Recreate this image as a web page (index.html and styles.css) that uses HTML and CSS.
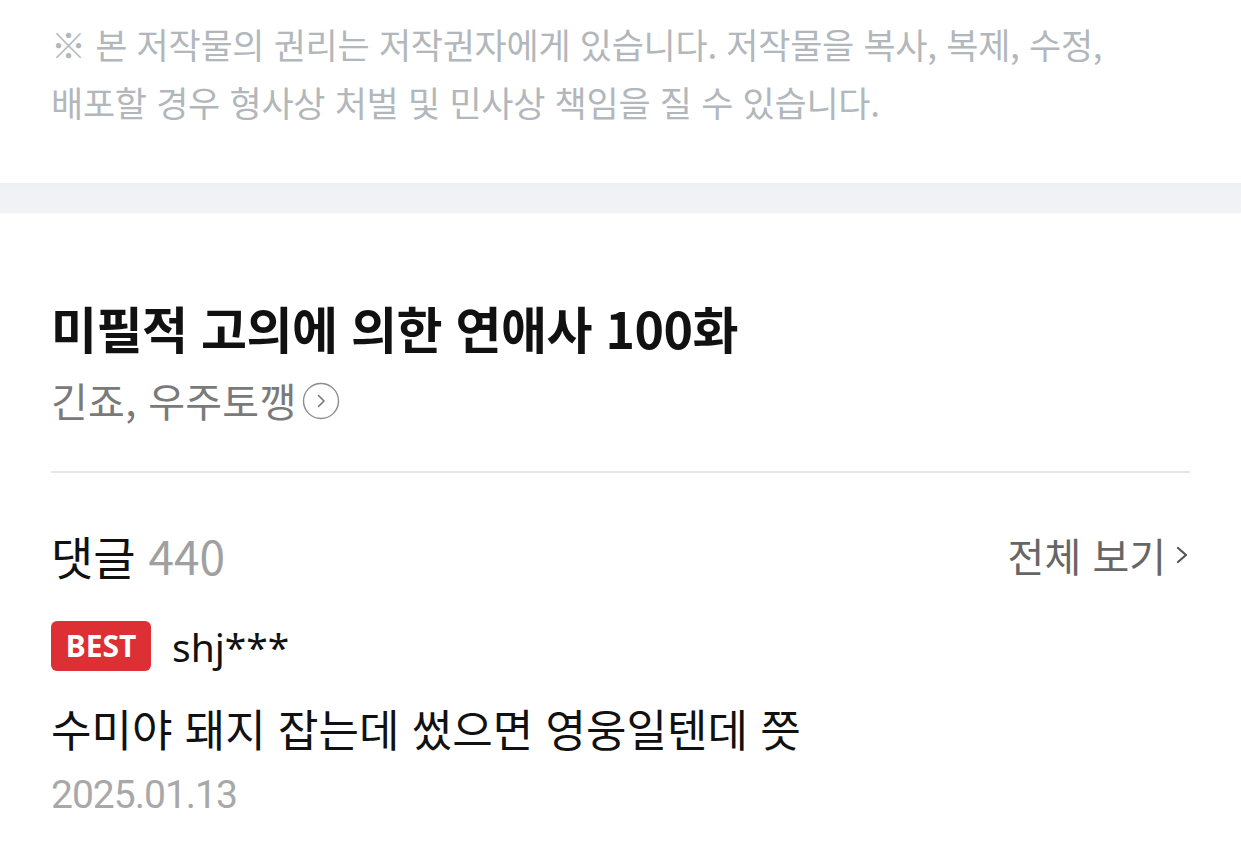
FILE: index.html
```html
<!DOCTYPE html>
<html lang="ko">
<head>
    <meta charset="UTF-8">
    <meta name="viewport" content="width=device-width, initial-scale=1.0">
    <title>미필적 고의에 의한 연애사 100화</title>
    <link rel="stylesheet" href="styles.css">
</head>
<body>
    <!-- Copyright notice -->
    <div class="notice">
        <p>※ 본 저작물의 권리는 저작권자에게 있습니다. 저작물을 복사, 복제, 수정,<br>배포할 경우 형사상 처벌 및 민사상 책임을 질 수 있습니다.</p>
    </div>
    <div class="band"></div>

    <!-- Episode info -->
    <div class="episode">
        <h1 class="episode-title">미필적 고의에 의한 연애사 100화</h1>
        <div class="episode-author">
            <span>긴죠, 우주토깽</span>
            <svg class="author-icon" width="38" height="38" viewBox="0 0 38 38">
                <circle cx="19" cy="19" r="17.5" fill="none" stroke="#8c8c8c" stroke-width="1.4"/>
                <path d="M16.5 13.5 L22 19 L16.5 24.5" fill="none" stroke="#777" stroke-width="1.6" stroke-linecap="round" stroke-linejoin="round"/>
            </svg>
        </div>
    </div>

    <!-- Comments -->
    <div class="comments">
        <div class="comments-head">
            <div class="comments-title">댓글 <span class="count">440</span></div>
            <a class="view-all" href="#">전체 보기
                <svg width="16" height="26" viewBox="0 0 16 26">
                    <path d="M4 6 L12 13 L4 20" fill="none" stroke="#555" stroke-width="2.2" stroke-linecap="round" stroke-linejoin="round"/>
                </svg>
            </a>
        </div>
        <div class="comment">
            <div class="comment-user">
                <span class="best">BEST</span>
                <span class="user">shj***</span>
            </div>
            <p class="comment-text">수미야 돼지 잡는데 썼으면 영웅일텐데 쯧</p>
            <div class="comment-date">2025.01.13</div>
        </div>
    </div>
</body>
</html>
```

FILE: styles.css
```css
body {
    font-family: "Noto Sans CJK KR", "Noto Sans", sans-serif;
    margin: 0;
    padding: 0;
    background-color: #fff;
    color: #111;
}
.notice {
    padding: 15px 51px 0;
    height: 168px;
}
.notice p {
    margin: 0;
    font-size: 35px;
    line-height: 58px;
    color: #b2b7bc;
    letter-spacing: -0.3px;
    white-space: nowrap;
}
.band {
    height: 30px;
    background: linear-gradient(#eef1f4, #f2f3f5);
}
.episode {
    margin: 0 51px;
    padding-top: 86px;
    padding-bottom: 49px;
    border-bottom: 2px solid #e6e6e6;
}
.episode-title {
    margin: 0;
    font-size: 50px;
    line-height: 56px;
    font-weight: bold;
    color: #111;
    letter-spacing: -0.5px;
}
.episode-author {
    margin-top: 23px;
    display: flex;
    align-items: center;
    font-size: 40px;
    line-height: 44px;
    color: #7a7a7a;
    letter-spacing: 0.3px;
}
.author-icon {
    margin-left: 5px;
    margin-top: 2px;
}
.comments {
    margin: 0 51px;
    padding-top: 57px;
}
.comments-head {
    display: flex;
    justify-content: space-between;
    align-items: center;
    height: 50px;
}
.comments-title {
    font-size: 46px;
    line-height: 50px;
    color: #111;
}
.comments-title .count {
    color: #a0a0a0;
}
.view-all {
    display: flex;
    align-items: center;
    gap: 8px;
    font-size: 40px;
    line-height: 50px;
    color: #666;
    text-decoration: none;
}
.comment-user {
    margin-top: 41px;
    display: flex;
    align-items: center;
    height: 50px;
}
.best {
    display: inline-block;
    width: 100px;
    height: 50px;
    line-height: 50px;
    text-align: center;
    background: #dc3035;
    color: #fff;
    border-radius: 6px;
    font-family: "Noto Sans", sans-serif;
    font-weight: bold;
    font-size: 30px;
}
.user {
    margin-left: 21px;
    font-family: "Noto Sans", sans-serif;
    font-size: 39px;
    color: #111;
}
.comment-text {
    margin: 32px 0 0;
    font-size: 44px;
    line-height: 50px;
    color: #111;
}
.comment-date {
    margin-top: 19px;
    font-family: Roboto, sans-serif;
    font-size: 39px;
    line-height: 46px;
    color: #a8a8a8;
    letter-spacing: -1px;
}
```
